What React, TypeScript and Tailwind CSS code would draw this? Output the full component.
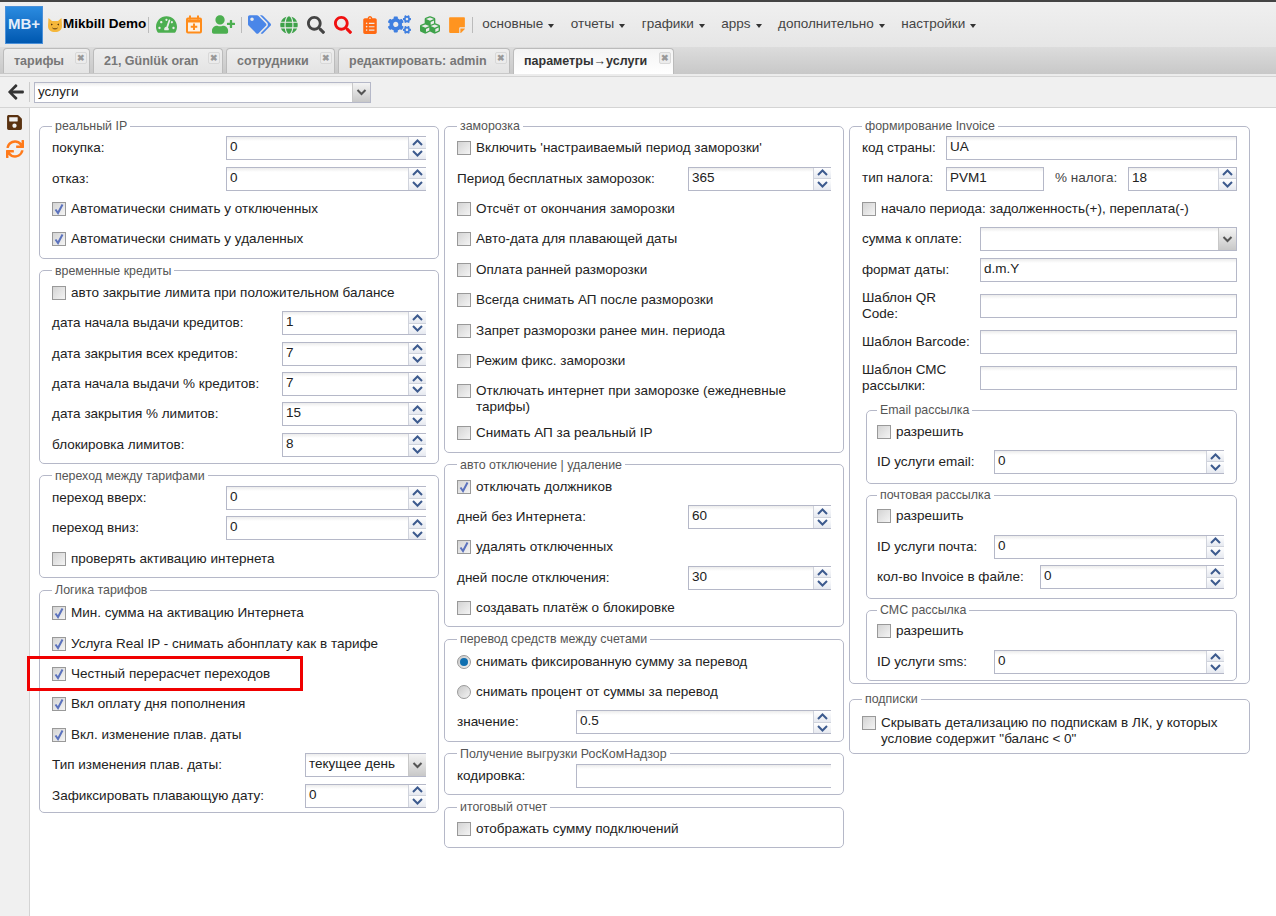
import type { ReactNode } from 'react';
import {
  FaArrowLeft,
  FaClipboardList,
  FaCogs,
  FaCubes,
  FaGlobe,
  FaSave,
  FaSearch,
  FaStickyNote,
  FaSync,
  FaTachometerAlt,
  FaTags,
  FaUserPlus,
} from 'react-icons/fa';

const fieldBorder = 'border border-[#b5b8c8]';
const fieldBg = 'bg-white bg-gradient-to-b from-[#ececec] via-white to-white bg-[length:100%_8px] bg-no-repeat';
const fieldText = 'leading-[20px] text-[13.5px] text-[#222]';

function Row({ children, tall }: { children: ReactNode; tall?: boolean }) {
  return <div className={`relative flex items-center ${tall ? 'h-[42px]' : 'h-[30.4px]'}`}>{children}</div>;
}

function Fieldset({
  title,
  children,
  pad = 'pt-px pb-[3px]',
  className,
}: {
  title: string;
  children: ReactNode;
  pad?: string;
  className?: string;
}) {
  return (
    <fieldset className={`border border-[#b5b8c8] rounded-[5px] px-3 ${pad} ${className ?? ''}`}>
      <legend className="px-[3px] text-[12.4px] leading-[12px] h-3 text-[#555]">{title}</legend>
      {children}
    </fieldset>
  );
}

function Spinner() {
  return (
    <div className="w-[18px] shrink-0 flex flex-col self-stretch border-l border-[#d0d3dc]">
      {[0, 1].map((i) => (
        <div
          key={i}
          className={`flex-1 flex items-center justify-center bg-gradient-to-b from-white to-[#e6e9f0] ${
            i === 0 ? 'border-b border-[#cfd3dc]' : ''
          }`}
        >
          <svg width="11" height="7" viewBox="0 0 11 7">
            <path
              d={i === 0 ? 'M1 6L5.500 1.500 10 6' : 'M1 1L5.500 5.500 10 1'}
              fill="none"
              stroke="#3c5a8e"
              strokeWidth="2"
            />
          </svg>
        </div>
      ))}
    </div>
  );
}

function NumberField({ value, closed }: { value: string; closed?: boolean }) {
  return (
    <div className={`flex-1 min-w-0 h-6 flex border-y border-l border-[#b5b8c8] ${closed ? 'border-r' : ''}`}>
      <div className={`flex-1 ${fieldBg} px-[3px] ${fieldText}`}>{value}</div>
      <Spinner />
    </div>
  );
}

function TextField({ value, className }: { value?: string; className?: string }) {
  return (
    <div className={`h-6 ${fieldBorder} ${fieldBg} px-[3px] ${fieldText} ${className ?? 'flex-1 min-w-0'}`}>{value}</div>
  );
}

function Combo({ value, open, height = 'h-6' }: { value?: string; open?: boolean; height?: string }) {
  return (
    <div className={`flex-1 min-w-0 ${height} flex border-y border-l border-[#b5b8c8] ${open ? '' : 'border-r'}`}>
      <div className={`flex-1 ${fieldBg} px-[3px] ${height === 'h-6' ? 'leading-[20px]' : 'leading-[18px]'} text-[13.5px] text-[#222]`}>
        {value}
      </div>
      <div className="w-[18px] flex items-center justify-center bg-gradient-to-b from-[#f4f4f4] to-[#c8c8c8] border-l border-[#c8c8c8]">
        <svg width="11" height="7" viewBox="0 0 11 7">
          <path d="M1.500 1L5.500 5 9.500 1" fill="none" stroke="#555" strokeWidth="2" />
        </svg>
      </div>
    </div>
  );
}

function Box({ checked, top }: { checked?: boolean; top?: boolean }) {
  return (
    <span
      className={`w-[14px] h-[14px] shrink-0 border border-[#999] bg-gradient-to-br from-[#d4d4d4] to-[#f4f4f4] flex items-center justify-center ${
        top ? 'mt-px' : ''
      }`}
    >
      {checked && (
        <svg width="12" height="12" viewBox="0 0 12 12">
          <path d="M2.500 6.500L5 10 9.500 1.500" fill="none" stroke="#5b72bd" strokeWidth="2" />
        </svg>
      )}
    </span>
  );
}

function Check({ label, checked, tall }: { label: ReactNode; checked?: boolean; tall?: boolean }) {
  return (
    <Row tall={tall}>
      <label
        className={`flex gap-[5px] text-[13.5px] leading-[16px] text-[#222] ${
          tall ? 'items-start self-start pt-[7px]' : 'items-center'
        }`}
      >
        <Box checked={checked} top={tall} />
        <span>{label}</span>
      </label>
    </Row>
  );
}

function Radio({ label, checked }: { label: string; checked?: boolean }) {
  return (
    <Row>
      <span className="w-[14px] h-[14px] mr-[5px] shrink-0 rounded-full border border-[#999] bg-gradient-to-br from-[#c8c8c8] to-[#f4f4f4] flex items-center justify-center">
        {checked && <span className="w-2 h-2 rounded-full bg-[#0f6fb0]" />}
      </span>
      <span className="text-[13.5px] text-[#222]">{label}</span>
    </Row>
  );
}

function Labeled({ label, width, children, tall }: { label: ReactNode; width: string; children: ReactNode; tall?: boolean }) {
  return (
    <Row tall={tall}>
      <span className={`${width} shrink-0 text-[13.5px] leading-[16px] text-[#222]`}>{label}</span>
      {children}
    </Row>
  );
}

function Num({ label, value, width }: { label: string; value: string; width: string }) {
  return (
    <Labeled label={label} width={width}>
      <NumberField value={value} />
    </Labeled>
  );
}

function Cat() {
  return (
    <svg width="16" height="16" viewBox="0 0 16 16" className="shrink-0">
      <path d="M1.500 1L5 4h6l3.500-3 .5 8c0 4-3 6-7 6s-7-2-7-6z" fill="#f5b73b" />
      <path d="M4 6.500l2 1-2 1zM12 6.500l-2 1 2 1z" fill="#5a3a10" />
      <path d="M5.500 11c1 1.200 4 1.200 5 0" fill="none" stroke="#5a3a10" strokeWidth="1" />
    </svg>
  );
}

function CalendarPlus({ size, className }: { size: number; className?: string }) {
  return (
    <svg width={size} height={size} viewBox="0 0 16 18" className={className}>
      <rect x="1" y="3" width="14" height="14" rx="1" fill="#fdf1e2" stroke="currentColor" strokeWidth="2" />
      <path d="M1 5.500h14" stroke="currentColor" strokeWidth="3" />
      <path d="M4 0v4M12 0v4" stroke="currentColor" strokeWidth="2" />
      <path d="M8 8v6.500M4.750 11.250h6.500" stroke="currentColor" strokeWidth="2" />
    </svg>
  );
}

const toolIcons = [
  { icon: FaTachometerAlt, color: 'text-[#4caf50]', size: 21, w: 'w-[21px]' },
  { icon: CalendarPlus, color: 'text-[#ff8c1a]', size: 19, w: 'w-[16px]' },
  { icon: FaUserPlus, color: 'text-[#4caf50]', size: 23, w: 'w-[24px]' },
];
const toolIcons2 = [
  { icon: FaTags, color: 'text-[#4a86e8]', size: 23, w: 'w-[23px]' },
  { icon: FaGlobe, color: 'text-[#3ea24a]', size: 18, w: 'w-[18px]' },
  { icon: FaSearch, color: 'text-[#444]', size: 18, w: 'w-[18px]' },
  { icon: FaSearch, color: 'text-[#f01010]', size: 18, w: 'w-[18px]' },
  { icon: FaClipboardList, color: 'text-[#ff6a13]', size: 18, w: 'w-[18px]' },
  { icon: FaCogs, color: 'text-[#3f7fe0]', size: 23, w: 'w-[23px]' },
  { icon: FaCubes, color: 'text-[#3ea24a]', size: 20, w: 'w-[20px]' },
];

const menus = ['основные', 'отчеты', 'графики', 'apps', 'дополнительно', 'настройки'];

const tabs = [
  { title: 'тарифы', width: 'w-[87px]' },
  { title: '21, Günlük oran', width: 'w-[130px]' },
  { title: 'сотрудники', width: 'w-[109px]' },
  { title: 'редактировать: admin', width: 'w-[172px]' },
  { title: 'параметры→услуги', width: 'w-[161px]', active: true },
];

function Toolbar() {
  return (
    <div className="h-[47px] shrink-0 border-t-2 border-[#444] bg-gradient-to-b from-[#f0f0f0] to-[#e6e6e6] flex items-center pl-[5px]">
      <div className="w-[38px] h-[38px] border border-[#4a90d9] bg-gradient-to-b from-[#2a8be0] to-[#0058b0] text-[#e4eefa] font-bold text-[15px] flex items-center justify-center">
        MB+
      </div>
      <div className="ml-1 flex items-center">
        <Cat />
        <span className="text-[13.5px] font-bold text-black">Mikbill Demo</span>
      </div>
      <div className="ml-[2px] w-px h-[16px] bg-[#bbb]" />
      <div className="ml-[7px] flex items-center gap-[9px]">
        {toolIcons.map(({ icon: Icon, color, size, w }, i) => (
          <span key={i} className={`${w} flex justify-center`}>
            <Icon size={size} className={color} />
          </span>
        ))}
      </div>
      <div className="ml-[6px] w-px h-[16px] bg-[#bbb]" />
      <div className="ml-[6px] flex items-center gap-[9px]">
        {toolIcons2.map(({ icon: Icon, color, size, w }, i) => (
          <span key={i} className={`${w} flex justify-center`}>
            <Icon size={size} className={color} />
          </span>
        ))}
      </div>
      <FaStickyNote size={18} className="ml-[8px] text-[#ff9420]" />
      <div className="ml-[6px] w-px h-[16px] bg-[#bbb]" />
      <nav className="ml-[9px] flex items-center gap-[16.5px] text-[13.5px] text-[#444]">
        {menus.map((m) => (
          <span key={m} className="flex items-center gap-[5px]">
            {m}
            <span className="w-0 h-0 mt-[2px] border-x-[3px] border-x-transparent border-t-[4px] border-t-[#333]" />
          </span>
        ))}
      </nav>
    </div>
  );
}

function Tabs() {
  return (
    <div className="h-[27px] shrink-0 bg-gradient-to-b from-[#dcdcdc] to-[#c8c8c8] flex items-end gap-[3px] pl-[3px]">
      {tabs.map((t) => (
        <div
          key={t.title}
          className={`${t.width} relative rounded-t-[4px] border border-b-0 border-[#bbb] pl-[10px] leading-[24px] text-[12.5px] font-bold ${
            t.active
              ? 'h-[26px] bg-gradient-to-b from-[#f4f4f4] to-white text-[#333]'
              : 'h-[25px] mb-px bg-gradient-to-b from-[#eee] to-[#e4e4e4] text-[#777]'
          }`}
        >
          {t.title}
          <span className="absolute right-[2px] top-[3px] w-3 h-3 rounded-[2px] border border-[#d8d8d8] bg-[#ececec] text-[#999] text-[9px] leading-[10px] text-center">
            ✖
          </span>
        </div>
      ))}
    </div>
  );
}

function PathBar() {
  return (
    <div className="shrink-0 bg-[#ececec] pt-[2px]">
      <div className="h-[32px] border-y border-[#d4d4d4] bg-[#f0f0f0] flex items-center">
        <FaArrowLeft size={18} className="ml-[7px] text-[#333]" />
        <div className="ml-1 w-px h-5 bg-[#ccc]" />
        <div className="ml-1 w-[337px] flex">
          <Combo value="услуги" height="h-[21px]" />
        </div>
      </div>
    </div>
  );
}

function Column1() {
  const w = 'w-[174px]';
  return (
    <div className="flex flex-col gap-[6px]">
      <Fieldset title="реальный IP">
        <Num label="покупка:" value="0" width={w} />
        <Num label="отказ:" value="0" width={w} />
        <Check label="Автоматически снимать у отключенных" checked />
        <Check label="Автоматически снимать у удаленных" checked />
      </Fieldset>
      <Fieldset title="временные кредиты">
        <Check label="авто закрытие лимита при положительном балансе" />
        <Num label="дата начала выдачи кредитов:" value="1" width="w-[230px]" />
        <Num label="дата закрытия всех кредитов:" value="7" width="w-[230px]" />
        <Num label="дата начала выдачи % кредитов:" value="7" width="w-[230px]" />
        <Num label="дата закрытия % лимитов:" value="15" width="w-[230px]" />
        <Num label="блокировка лимитов:" value="8" width="w-[230px]" />
      </Fieldset>
      <Fieldset title="переход между тарифами">
        <Num label="переход вверх:" value="0" width={w} />
        <Num label="переход вниз:" value="0" width={w} />
        <Check label="проверять активацию интернета" />
      </Fieldset>
      <Fieldset title="Логика тарифов" pad="pt-[2px] pb-px">
        <Check label="Мин. сумма на активацию Интернета" checked />
        <Check label="Услуга Real IP - снимать абонплату как в тарифе" checked />
        <div className="relative">
          <Check label="Честный перерасчет переходов" checked />
          <div className="absolute -left-[25px] top-[-3px] w-[276px] h-[35px] border-[3px] border-[#f00000]" />
        </div>
        <Check label="Вкл оплату дня пополнения" checked />
        <Check label="Вкл. изменение плав. даты" checked />
        <Labeled label="Тип изменения плав. даты:" width="w-[253px]">
          <Combo value="текущее день" open />
        </Labeled>
        <Num label="Зафиксировать плавающую дату:" value="0" width="w-[253px]" />
      </Fieldset>
    </div>
  );
}

function Column2() {
  const w = 'w-[231px]';
  const t = 'w-[119px]';
  return (
    <div className="flex flex-col gap-[6px]">
      <Fieldset title="заморозка">
        <Check label="Включить 'настраиваемый период заморозки'" />
        <Num label="Период бесплатных заморозок:" value="365" width={w} />
        <Check label="Отсчёт от окончания заморозки" />
        <Check label="Авто-дата для плавающей даты" />
        <Check label="Оплата ранней разморозки" />
        <Check label="Всегда снимать АП после разморозки" />
        <Check label="Запрет разморозки ранее мин. периода" />
        <Check label="Режим фикс. заморозки" />
        <Check label="Отключать интернет при заморозке (ежедневные тарифы)" tall />
        <Check label="Снимать АП за реальный IP" />
      </Fieldset>
      <Fieldset title="авто отключение | удаление">
        <Check label="отключать должников" checked />
        <Num label="дней без Интернета:" value="60" width={w} />
        <Check label="удалять отключенных" checked />
        <Num label="дней после отключения:" value="30" width={w} />
        <Check label="создавать платёж о блокировке" />
      </Fieldset>
      <Fieldset title="перевод средств между счетами">
        <Radio label="снимать фиксированную сумму за перевод" checked />
        <Radio label="снимать процент от суммы за перевод" />
        <Num label="значение:" value="0.5" width={t} />
      </Fieldset>
      <Fieldset title="Получение выгрузки РосКомНадзор">
        <Labeled label="кодировка:" width={t}>
          <div className={`flex-1 h-6 border-y border-l border-[#b5b8c8] ${fieldBg}`} />
        </Labeled>
      </Fieldset>
      <Fieldset title="итоговый отчет">
        <Check label="отображать сумму подключений" />
      </Fieldset>
    </div>
  );
}

function Column3() {
  const w = 'w-[118px]';
  const inner = 'pl-[10px]';
  return (
    <div className="flex flex-col">
      <Fieldset title="формирование Invoice" pad="pt-px pb-[2px]">
        <Labeled label="код страны:" width="w-[84px]">
          <TextField value="UA" />
        </Labeled>
        <Row>
          <span className="w-[84px] shrink-0 text-[13.5px] text-[#222]">тип налога:</span>
          <TextField value="PVM1" className="w-[98px]" />
          <span className="ml-[11px] w-[73px] shrink-0 text-[13.5px] text-[#444]">% налога:</span>
          <NumberField value="18" closed />
        </Row>
        <Check label="начало периода: задолженность(+), переплата(-)" />
        <Labeled label="сумма к оплате:" width={w}>
          <Combo />
        </Labeled>
        <Labeled label="формат даты:" width={w}>
          <TextField value="d.m.Y" />
        </Labeled>
        <Labeled label={<>Шаблон QR<br />Code:</>} width={w} tall>
          <TextField />
        </Labeled>
        <Labeled label="Шаблон Barcode:" width={w}>
          <TextField />
        </Labeled>
        <Labeled label={<>Шаблон СМС<br />рассылки:</>} width={w} tall>
          <TextField />
        </Labeled>
        <div className="ml-1 mt-[5px] flex flex-col gap-[5px]">
          <Fieldset title="Email рассылка" pad="pt-0 pb-[6px]" className={inner}>
            <Check label="разрешить" />
            <Num label="ID услуги email:" value="0" width="w-[117px]" />
          </Fieldset>
          <Fieldset title="почтовая рассылка" pad="pt-0 pb-[6px]" className={inner}>
            <Check label="разрешить" />
            <Num label="ID услуги почта:" value="0" width="w-[117px]" />
            <Num label="кол-во Invoice в файле:" value="0" width="w-[163px]" />
          </Fieldset>
          <Fieldset title="СМС рассылка" pad="pt-0 pb-[3px]" className={inner}>
            <Check label="разрешить" />
            <Num label="ID услуги sms:" value="0" width="w-[117px]" />
          </Fieldset>
        </div>
      </Fieldset>
      <Fieldset title="подписки" pad="pt-[3px] pb-[3px]" className="mt-[9px]">
        <Check label={'Скрывать детализацию по подпискам в ЛК, у которых условие содержит "баланс < 0"'} tall />
      </Fieldset>
    </div>
  );
}

export default function App() {
  return (
    <div className="h-screen overflow-hidden flex flex-col bg-white font-['Liberation_Sans',Arial,sans-serif]">
      <Toolbar />
      <Tabs />
      <PathBar />
      <div className="flex flex-1 min-h-0">
        <aside className="w-[30px] shrink-0 border-r border-[#d4d4d4] bg-[#f0f0f0] flex flex-col items-center pt-[6px] gap-[9px]">
          <FaSave size={17} className="text-[#5a3210]" />
          <FaSync size={18} className="text-[#ff7a1a]" />
        </aside>
        <main className="flex-1 pt-3 pl-[9px] pr-[26px] grid grid-cols-[400px_400px_401px] gap-x-[5px] items-start">
          <Column1 />
          <Column2 />
          <Column3 />
        </main>
      </div>
    </div>
  );
}
